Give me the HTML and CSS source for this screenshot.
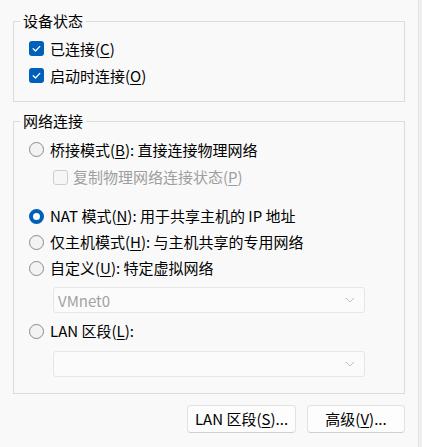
FILE: index.html
```html
<!DOCTYPE html>
<html lang="zh-CN">
<head>
<meta charset="utf-8">
<title>网络连接</title>
<link rel="stylesheet" href="styles.css">
</head>
<body>
<div class="window">
  <div class="dialog">
    <fieldset class="group group-device">
      <legend>设备状态</legend>
      <div class="group-body body-device">
        <div class="opt">
          <span class="cb cb-on"><svg viewBox="0 0 15 15" width="15" height="15"><path d="M4.2 7.8 L6.5 10 L10.8 5.4" fill="none" stroke="#fff" stroke-width="1.3" stroke-linecap="round" stroke-linejoin="round"/></svg></span>
          <span class="txt">已连接(<u>C</u>)</span>
        </div>
        <div class="opt">
          <span class="cb cb-on"><svg viewBox="0 0 15 15" width="15" height="15"><path d="M4.2 7.8 L6.5 10 L10.8 5.4" fill="none" stroke="#fff" stroke-width="1.3" stroke-linecap="round" stroke-linejoin="round"/></svg></span>
          <span class="txt">启动时连接(<u>O</u>)</span>
        </div>
      </div>
    </fieldset>

    <fieldset class="group group-net">
      <legend>网络连接</legend>
      <div class="group-body body-net">
        <div class="opt row27">
          <span class="rb"></span>
          <span class="txt">桥接模式(<u>B</u>): 直接连接物理网络</span>
        </div>
        <div class="opt row28 indent">
          <span class="cb cb-disabled"></span>
          <span class="txt txt-disabled">复制物理网络连接状态(<u>P</u>)</span>
        </div>
        <div class="opt row26 gap-nat">
          <span class="rb rb-on"></span>
          <span class="txt">NAT 模式(<u>N</u>): 用于共享主机的 IP 地址</span>
        </div>
        <div class="opt row26">
          <span class="rb"></span>
          <span class="txt">仅主机模式(<u>H</u>): 与主机共享的专用网络</span>
        </div>
        <div class="opt row26">
          <span class="rb"></span>
          <span class="txt">自定义(<u>U</u>): 特定虚拟网络</span>
        </div>
        <div class="select select-vmnet">
          <span class="select-value">VMnet0</span>
          <svg class="chev" viewBox="0 0 10 6" width="10" height="6"><path d="M1 1 L5 5 L9 1" fill="none" stroke="#bdbdbd" stroke-width="1"/></svg>
        </div>
        <div class="opt row26 gap-lan">
          <span class="rb"></span>
          <span class="txt">LAN 区段(<u>L</u>):</span>
        </div>
        <div class="select select-lan">
          <span class="select-value"></span>
          <svg class="chev" viewBox="0 0 10 6" width="10" height="6"><path d="M1 1 L5 5 L9 1" fill="none" stroke="#bdbdbd" stroke-width="1"/></svg>
        </div>
      </div>
    </fieldset>

    <div class="actions">
      <button class="btn btn-lan" type="button">LAN 区段(<u>S</u>)...</button>
      <button class="btn btn-adv" type="button">高级(<u>V</u>)...</button>
    </div>
  </div>
  <div class="edge"></div>
</div>
</body>
</html>
```

FILE: styles.css
```css
html, body {
  margin: 0;
  padding: 0;
  background: #f9f9f9;
}

body {
  font-family: "Noto Sans CJK SC", "Noto Sans", sans-serif;
  font-size: 15px;
  color: #000;
}

.window {
  display: flex;
  width: 422px;
  height: 447px;
  overflow: hidden;
}

.dialog {
  width: 418px;
  box-sizing: border-box;
  padding: 11px 0 0 13px;
}

.edge {
  width: 4px;
  box-sizing: border-box;
  background: #efefef;
  border-left: 1px solid #e4e4e4;
}

.group {
  margin: 0;
  padding: 0;
  width: 392px;
  min-width: 0;
  box-sizing: border-box;
  border: 1px solid #dcdcdc;
}

.group legend {
  margin-left: 6px;
  padding: 0 3px;
  line-height: 20px;
  height: 20px;
}

.group-net {
  margin-top: 9px;
}

.group-body {
  display: flex;
  flex-direction: column;
  padding-left: 15px;
}

.body-device {
  padding-top: 4px;
  padding-bottom: 12px;
}

.body-net {
  padding-top: 5px;
  padding-bottom: 16px;
}

.opt {
  display: flex;
  align-items: center;
  height: 27px;
  line-height: 20px;
  white-space: nowrap;
}

.row27 { height: 27px; }
.row28 { height: 28px; }
.row26 { height: 26px; }

.indent {
  padding-left: 24px;
}

.gap-nat { margin-top: 12px; }
.gap-lan { margin-top: 5px; }

.txt {
  margin-left: 6px;
}

.txt u,
.btn u {
  text-decoration: underline;
  text-decoration-thickness: 1px;
  text-underline-offset: 2px;
}

.txt-disabled {
  color: #9e9e9e;
  margin-left: 5px;
}

.cb {
  flex: none;
  display: block;
  width: 15px;
  height: 15px;
  box-sizing: border-box;
  border-radius: 3px;
}

.cb svg {
  display: block;
}

.cb-on {
  background: #005fb8;
}

.cb-disabled {
  border: 1px solid #cdcdcd;
  background: #f6f6f6;
}

.rb {
  flex: none;
  display: block;
  width: 15px;
  height: 15px;
  box-sizing: border-box;
  border-radius: 50%;
  border: 1px solid #8a8a8a;
  background: #f3f3f3;
}

.rb-on {
  border: 4.5px solid #005fb8;
  background: #fff;
}

.select {
  display: flex;
  align-items: center;
  justify-content: space-between;
  width: 312px;
  height: 26px;
  box-sizing: border-box;
  margin-left: 24px;
  padding: 0 9px 0 4px;
  border: 1px solid #e6e6e6;
  border-radius: 3px;
  background: #fbfbfb;
  color: #a2a2a2;
}

.select-vmnet { margin-top: 6px; }
.select-lan { margin-top: 7px; }

.chev {
  display: block;
}

.actions {
  display: flex;
  justify-content: flex-end;
  gap: 11px;
  width: 392px;
  margin-top: 11px;
}

.btn {
  height: 28px;
  box-sizing: border-box;
  padding: 0;
  border: 1px solid #e2e2e2;
  border-bottom-color: #d0d0d0;
  border-radius: 4px;
  background: #fdfdfd;
  font-family: inherit;
  font-size: 15px;
  color: #000;
  line-height: 20px;
}

.btn-lan { width: 109px; }
.btn-adv { width: 98px; }
```
